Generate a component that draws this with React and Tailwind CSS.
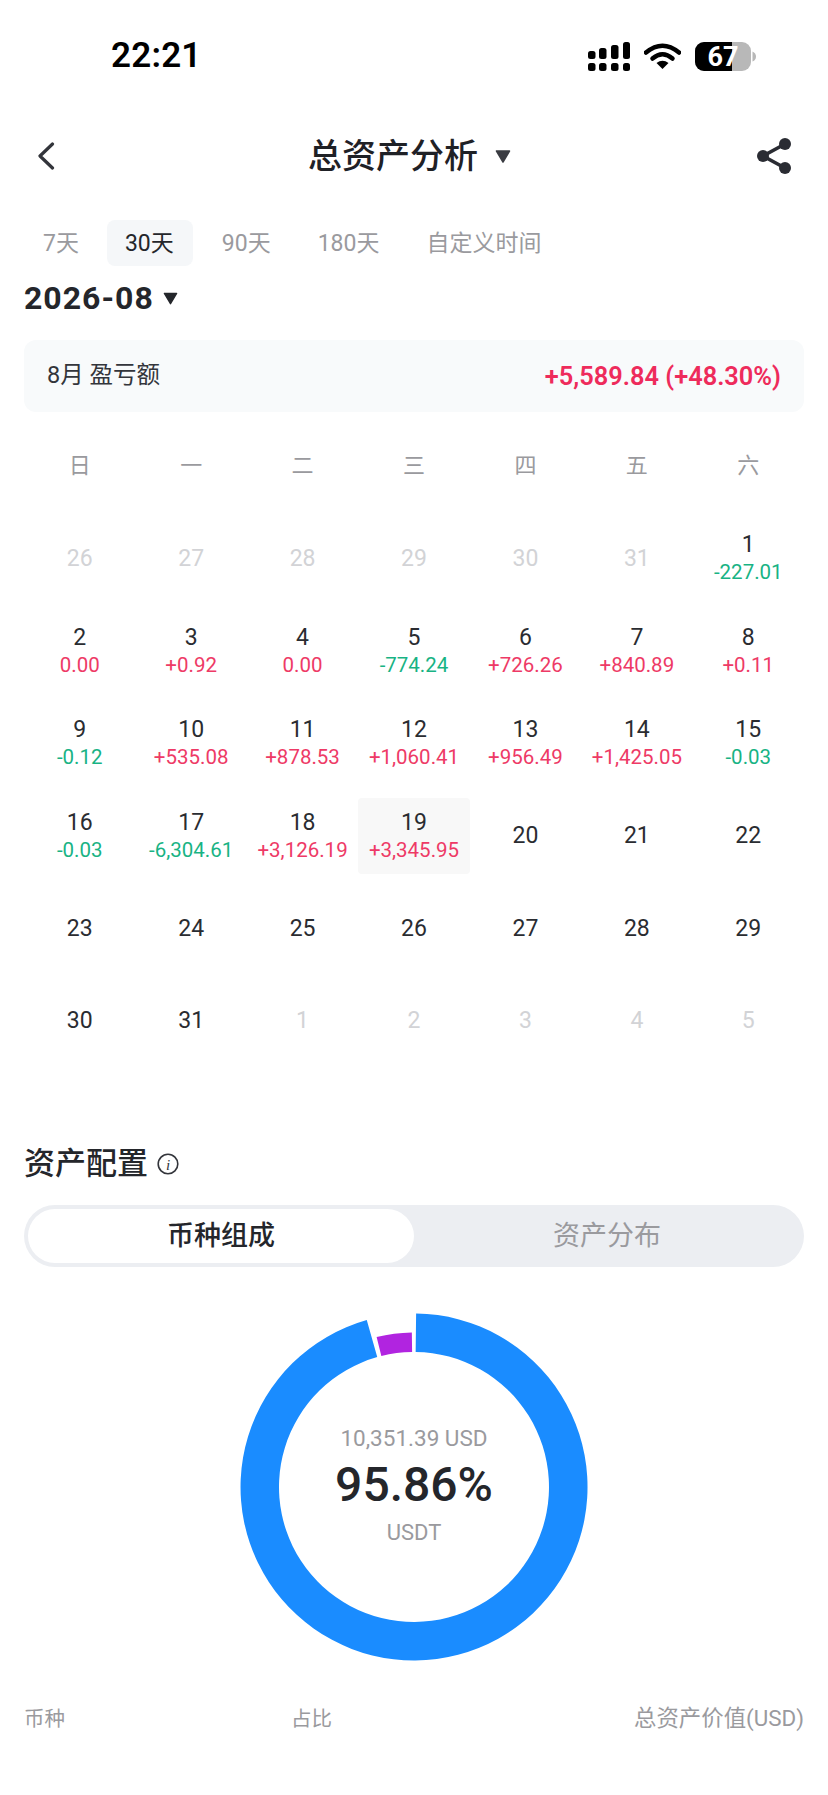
import React from 'react'
import { clsx } from 'clsx'

const WEEK = ['日', '一', '二', '三', '四', '五', '六']

const DAYS = [
  { d: '26', off: true }, { d: '27', off: true }, { d: '28', off: true }, { d: '29', off: true },
  { d: '30', off: true }, { d: '31', off: true }, { d: '1', v: '-227.01' },
  { d: '2', v: '0.00', zero: true }, { d: '3', v: '+0.92' }, { d: '4', v: '0.00', zero: true }, { d: '5', v: '-774.24' },
  { d: '6', v: '+726.26' }, { d: '7', v: '+840.89' }, { d: '8', v: '+0.11' },
  { d: '9', v: '-0.12' }, { d: '10', v: '+535.08' }, { d: '11', v: '+878.53' }, { d: '12', v: '+1,060.41' },
  { d: '13', v: '+956.49' }, { d: '14', v: '+1,425.05' }, { d: '15', v: '-0.03' },
  { d: '16', v: '-0.03' }, { d: '17', v: '-6,304.61' }, { d: '18', v: '+3,126.19' }, { d: '19', v: '+3,345.95', active: true },
  { d: '20' }, { d: '21' }, { d: '22' },
  { d: '23' }, { d: '24' }, { d: '25' }, { d: '26' }, { d: '27' }, { d: '28' }, { d: '29' },
  { d: '30' }, { d: '31' }, { d: '1', off: true }, { d: '2', off: true }, { d: '3', off: true }, { d: '4', off: true }, { d: '5', off: true },
]

const polar = (r, deg) => {
  const a = ((deg - 90) * Math.PI) / 180
  return `${(175 + r * Math.cos(a)).toFixed(2)} ${(175 + r * Math.sin(a)).toFixed(2)}`
}

// ring segment, angles clockwise from 12 o'clock
const arc = (outer, inner, from, to) => {
  const large = to - from > 180 ? 1 : 0
  return `M${polar(outer, from)} A${outer} ${outer} 0 ${large} 1 ${polar(outer, to)} L${polar(inner, to)} A${inner} ${inner} 0 ${large} 0 ${polar(inner, from)} Z`
}

const Caret = ({ className }) => (
  <svg viewBox="0 0 16 13" className={className}>
    <path d="M1.5 1h13L8 12z" fill="currentColor" stroke="currentColor" strokeWidth="1.5" strokeLinejoin="round" />
  </svg>
)

const StatusBar = () => (
  <div className="h-[112px] flex items-center justify-between pl-[111px] pr-[72px]">
    <span className="text-[35px] font-semibold text-black tracking-[0.2px]">22:21</span>
    <div className="flex items-center">
      <svg viewBox="0 0 42 29" className="w-[42px] h-[29px]">
        <rect x="0" y="9" width="7.5" height="8" rx="2.5" />
        <rect x="11" y="6" width="7.5" height="11" rx="2.5" />
        <rect x="23" y="3" width="7.5" height="14" rx="2.5" />
        <rect x="35" y="0" width="7" height="17" rx="2.5" />
        <rect x="0" y="21" width="7.5" height="8" rx="2.5" />
        <rect x="11" y="21" width="7.5" height="8" rx="2.5" />
        <rect x="23" y="21" width="7.5" height="8" rx="2.5" />
        <rect x="35" y="21" width="7" height="8" rx="2.5" />
      </svg>
      <svg viewBox="0 0 37 26" className="w-[37px] h-[26px] ml-[14px]">
        <path d="M2 9.5Q18.5 -4 35 9.5" fill="none" stroke="#000" strokeWidth="4.5" strokeLinecap="round" />
        <path d="M8.5 15.5Q18.5 7 28.5 15.5" fill="none" stroke="#000" strokeWidth="4.5" strokeLinecap="round" />
        <path d="M12.5 20Q18.5 15.5 24.5 20L18.5 26Z" fill="#000" />
      </svg>
      <svg viewBox="0 0 61 29" className="w-[61px] h-[29px] ml-[14px] overflow-visible">
        <rect x="0" y="0" width="56" height="29" rx="9" fill="#b8b8b8" />
        <path d="M9 0H37V29H9A9 9 0 0 1 0 20V9A9 9 0 0 1 9 0Z" fill="#000" />
        <path d="M57.5 9.5Q61 11 61 14.5T57.5 19.5Z" fill="#b8b8b8" />
        <text x="28" y="24" textAnchor="middle" fontSize="27" fontWeight="700" fill="#fff" fontFamily="Roboto, sans-serif">67</text>
      </svg>
    </div>
  </div>
)

const Header = () => (
  <div className="h-[88px] relative flex items-center justify-center">
    <svg viewBox="0 0 18 28" className="absolute left-[37px] top-[30px] w-[18px] h-[28px]">
      <path d="M15.5 2L3 14l12.5 12" fill="none" stroke="#33353b" strokeWidth="3.2" strokeLinecap="round" strokeLinejoin="round" />
    </svg>
    <div className="flex items-center text-[#1f2126] mr-[9px]">
      <span className="text-[34px] font-medium">总资产分析</span>
      <Caret className="w-[16px] h-[13px] ml-[17px] text-[#3a3c42]" />
    </div>
    <svg viewBox="0 0 36 38" className="absolute left-[756px] top-[25px] w-[36px] h-[38px]">
      <path d="M29 7L7 19l22 12" fill="none" stroke="#2a2c33" strokeWidth="3.6" />
      <circle cx="29" cy="7" r="6" fill="#2a2c33" />
      <circle cx="7" cy="19" r="6" fill="#2a2c33" />
      <circle cx="29" cy="31" r="6" fill="#2a2c33" />
    </svg>
  </div>
)

const RangeTabs = () => (
  <div className="mt-[20px] ml-[25px] flex gap-[11px] text-[23px] text-[#9a9a9e]">
    <div className="h-[46px] pt-[2px] pl-[18px] pr-[17px] flex items-center">7天</div>
    <div className="h-[46px] pt-[2px] pl-[18px] pr-[19px] flex items-center rounded-[8px] bg-[#f5f7f9] text-[#24262b]">30天</div>
    <div className="h-[46px] pt-[2px] px-[18px] flex items-center">90天</div>
    <div className="h-[46px] pt-[2px] px-[18px] flex items-center">180天</div>
    <div className="h-[46px] pt-[2px] px-[18px] flex items-center">自定义时间</div>
  </div>
)

const DayCell = ({ day }) => {
  const color = day.v && (day.v[0] === '-' ? 'text-[#18b384]' : 'text-[#ee3a66]')
  return (
    <div className={clsx('h-[76px] flex flex-col items-center justify-center', day.active && 'bg-[#f8f8f8] rounded-[4px]')}>
      <span className={clsx('text-[23px] leading-[29px]', day.off ? 'text-[#d2d3d6]' : 'text-[#2a2c31]')}>{day.d}</span>
      {day.v && <span className={clsx('text-[20.5px] leading-[27px] whitespace-nowrap', color)}>{day.v}</span>}
    </div>
  )
}

const Donut = () => (
  <div className="mt-[45px] relative w-[350px] h-[350px] mx-auto">
    <svg viewBox="0 0 350 350" className="w-full h-full">
      <path d={arc(173.5, 135, 0.7, 344.2)} fill="#1a8cff" />
      <path d={arc(154.5, 135, 346, 359.2)} fill="#b124e0" />
    </svg>
    <div className="absolute inset-0 flex flex-col items-center">
      <span className="mt-[112px] text-[22.5px] leading-[28px] text-[#9a9a9e]">10,351.39 USD</span>
      <span className="mt-[3px] text-[48px] leading-[60px] font-medium text-[#24262b]">95.86%</span>
      <span className="mt-[4px] text-[22px] leading-[28px] text-[#9a9a9e]">USDT</span>
    </div>
  </div>
)

export default function App() {
  return (
    <div className="w-[828px] h-[1795px] bg-white overflow-hidden font-['Roboto','Noto_Sans_CJK_SC',sans-serif]">
      <StatusBar />
      <Header />
      <RangeTabs />

      <div className="mt-[12px] ml-[24px] h-[40px] flex items-center text-[#24262b]">
        <span className="text-[32px] font-bold tracking-[1px]">2026-08</span>
        <Caret className="w-[15px] h-[13px] ml-[9px]" />
      </div>

      <div className="mt-[22px] mx-[24px] h-[72px] px-[23px] flex items-center justify-between rounded-[12px] bg-[#f8fafb]">
        <span className="text-[23.5px] text-[#33353b]">8月 盈亏额</span>
        <span className="text-[25.4px] font-semibold text-[#ee2b5b]">+5,589.84 (+48.30%)</span>
      </div>

      <div className="mt-[33px] mx-[24px] h-[40px] grid grid-cols-7 items-center text-center text-[22px] text-[#9a9a9e]">
        {WEEK.map((w) => <span key={w}>{w}</span>)}
      </div>

      <div className="mt-[35px] mx-[24px] grid grid-cols-7 gap-y-[16.6px]">
        {DAYS.map((day, i) => <DayCell key={i} day={day} />)}
      </div>

      <div className="mt-[85px] ml-[24px] h-[40px] flex items-center text-[#24262b]">
        <span className="text-[31px] font-medium">资产配置</span>
        <svg viewBox="0 0 22 22" className="w-[22px] h-[22px] ml-[9px]">
          <circle cx="11" cy="11" r="9.8" fill="none" stroke="#33353b" strokeWidth="1.6" />
          <text x="11" y="16.5" textAnchor="middle" fontSize="15" fontStyle="italic" fill="#33353b" fontFamily="'Liberation Serif', serif">i</text>
        </svg>
      </div>

      <div className="mt-[21px] mx-[24px] h-[62px] p-[4px] flex rounded-full bg-[#eceef2]">
        <div className="w-[386px] flex items-center justify-center rounded-full bg-white text-[27px] font-medium text-[#24262b]">币种组成</div>
        <div className="flex-1 flex items-center justify-center text-[27px] text-[#9a9a9e]">资产分布</div>
      </div>

      <Donut />

      <div className="mt-[42px] mx-[24px] h-[30px] flex items-center text-[20.5px] text-[#9a9a9e]">
        <span className="w-[267px]">币种</span>
        <span className="flex-1">占比</span>
        <span className="text-[22.4px]">总资产价值(USD)</span>
      </div>
    </div>
  )
}
